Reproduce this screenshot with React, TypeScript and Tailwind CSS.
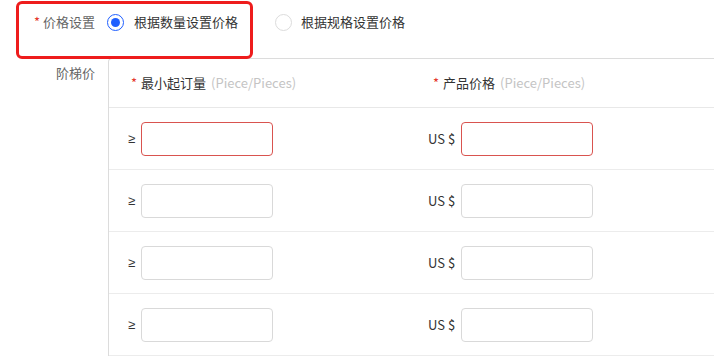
import React from "react";

const rows = [true, false, false, false];

export default function App() {
  return (
    <div
      className="relative h-[358px] w-[714px] overflow-hidden bg-white text-[13px]"
      style={{ fontFamily: '"Noto Sans CJK SC", "Open Sans", sans-serif' }}
    >
      <div className="flex h-[44px] items-center">
        <div className="w-[96px] shrink-0 pr-[1px] text-right text-[#666]">
          <span className="mr-[3px] text-[#e5362c]">*</span>价格设置
        </div>
        <label className="ml-[11px] flex items-center text-[#333]">
          <span className="flex h-[17px] w-[17px] items-center justify-center rounded-full border border-[#1f5fff]">
            <span className="h-[9px] w-[9px] rounded-full bg-[#1f5fff]" />
          </span>
          <span className="ml-[10px]">根据数量设置价格</span>
        </label>
        <label className="ml-[37px] flex items-center text-[#333]">
          <span className="h-[17px] w-[17px] rounded-full border border-[#dcdcdc]" />
          <span className="ml-[9px]">根据规格设置价格</span>
        </label>
      </div>

      <div className="mt-[14px] flex">
        <div className="w-[96px] shrink-0 pr-[1px] pt-[5px] text-right text-[#666]">阶梯价</div>
        <div className="ml-[12px] w-[700px] shrink-0 rounded-tl-[4px] border-l border-t border-[#dcdcdc]">
          <div className="flex h-[49px] items-center border-b border-[#e8e8e8]">
            <div className="w-[300px] shrink-0 pl-[22px] text-[#333]">
              <span className="mr-[4px] text-[#e5362c]">*</span>最小起订量
              <span className="ml-[5px] text-[#c4c4c4]">(Piece/Pieces)</span>
            </div>
            <div className="pl-[24px] text-[#333]">
              <span className="mr-[4px] text-[#e5362c]">*</span>产品价格
              <span className="ml-[5px] text-[#c4c4c4]">(Piece/Pieces)</span>
            </div>
          </div>
          {rows.map((err, i) => (
            <div key={i} className="flex h-[62px] items-center border-b border-[#ececec]">
              <div className="flex w-[300px] shrink-0 items-center pl-[19px]">
                <span
                  className="w-[13px] text-[#333]"
                  style={{ fontFamily: '"Liberation Sans", sans-serif' }}
                >
                  ≥
                </span>
                <input
                  className={`h-[34px] w-[132px] rounded-[4px] border outline-none ${
                    err ? "border-[#d9534f]" : "border-[#d9d9d9]"
                  }`}
                />
              </div>
              <div className="flex items-center pl-[19px]">
                <span className="w-[33px] text-[#333]">US $</span>
                <input
                  className={`h-[34px] w-[132px] rounded-[4px] border outline-none ${
                    err ? "border-[#d9534f]" : "border-[#d9d9d9]"
                  }`}
                />
              </div>
            </div>
          ))}
        </div>
      </div>

      <div className="pointer-events-none absolute left-[16px] top-[1px] h-[58px] w-[237px] rounded-[6px] border-[3px] border-[#ee1c1c]" />
    </div>
  );
}
